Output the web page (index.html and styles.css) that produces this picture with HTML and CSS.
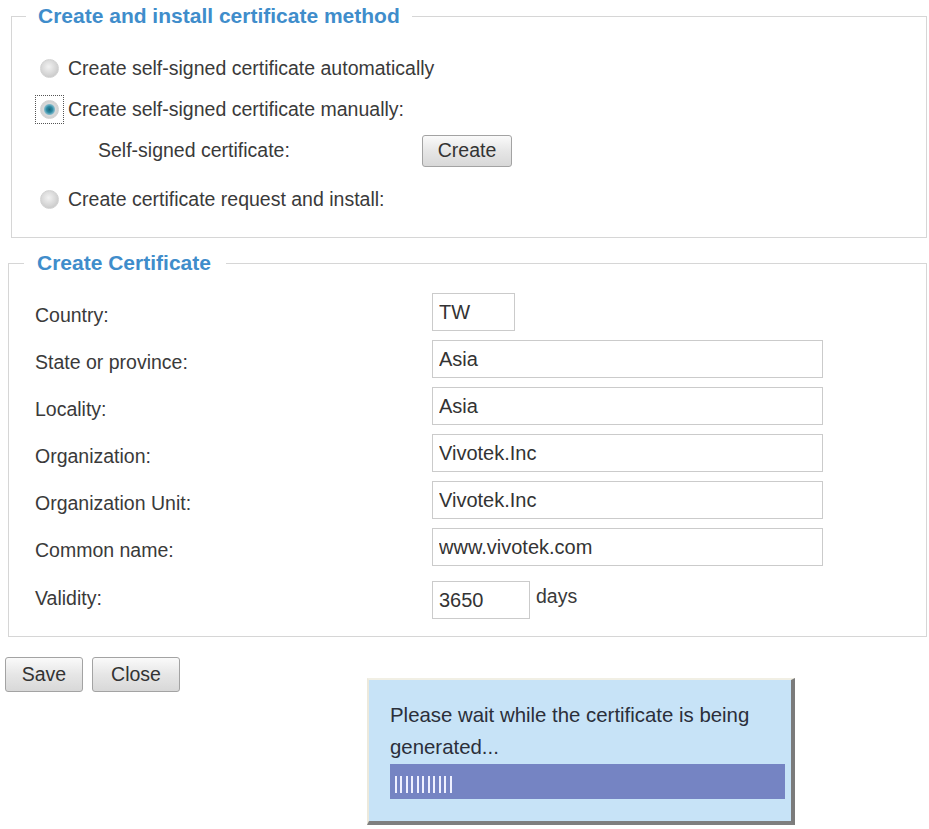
FILE: index.html
```html
<!DOCTYPE html>
<html lang="en">
<head>
    <meta charset="UTF-8">
    <meta name="viewport" content="width=device-width, initial-scale=1.0">
    <title>Certificate</title>
    <link rel="stylesheet" href="styles.css">
</head>
<body>

    <div class="page">
        <fieldset class="box method">
            <legend>Create and install certificate method</legend>
            <label class="opt">
                <span class="radio-wrap"><input type="radio" name="method"></span>
                Create self-signed certificate automatically
            </label>
            <label class="opt">
                <span class="radio-wrap focus"><input type="radio" name="method" checked></span>
                Create self-signed certificate manually:
            </label>
            <div class="sub">
                <span class="sub-label">Self-signed certificate:</span>
                <button class="btn btn-create">Create</button>
            </div>
            <label class="opt opt-last">
                <span class="radio-wrap"><input type="radio" name="method"></span>
                Create certificate request and install:
            </label>
        </fieldset>

        <fieldset class="box cert">
            <legend>Create Certificate</legend>
            <div class="form-grid">
                <span class="field-label">Country:</span>
                <div><input class="text w-short" type="text" value="TW"></div>

                <span class="field-label">State or province:</span>
                <div><input class="text w-long" type="text" value="Asia"></div>

                <span class="field-label">Locality:</span>
                <div><input class="text w-long" type="text" value="Asia"></div>

                <span class="field-label">Organization:</span>
                <div><input class="text w-long" type="text" value="Vivotek.Inc"></div>

                <span class="field-label">Organization Unit:</span>
                <div><input class="text w-long" type="text" value="Vivotek.Inc"></div>

                <span class="field-label">Common name:</span>
                <div><input class="text w-long" type="text" value="www.vivotek.com"></div>

                <span class="field-label validity-label">Validity:</span>
                <div class="days-row"><input class="text w-mid" type="text" value="3650"><span class="days">days</span></div>
            </div>
        </fieldset>

        <div class="actions">
            <button class="btn btn-save">Save</button>
            <button class="btn btn-close">Close</button>
        </div>

        <!-- progress popup over the page -->
        <div class="wait-box">
            <p class="wait-text">Please wait while the certificate is being generated...</p>
            <div class="progress"><span class="ticks"></span></div>
        </div>
    </div>

</body>
</html>
```

FILE: styles.css
```css
body {
    margin: 0;
    font-family: "Liberation Sans", Arial, sans-serif;
    font-size: 19.5px;
    color: #3a3a3a;
    background: #fff;
}

.page {
    position: relative;
    width: 929px;
    height: 829px;
    overflow: hidden;
}

.box {
    border: 1px solid #d6d6d6;
    padding: 0;
    min-width: 0;
}

.box legend {
    font-size: 21px;
    font-weight: bold;
    line-height: 28px;
    color: #3f8dcb;
}

/* method block */
.method {
    margin: 2px 2px 0 11px;
    padding: 18px 0 17px 23px;
}

.method legend {
    margin-left: -9px;
    padding: 0 12px;
}

.opt {
    display: flex;
    align-items: center;
    height: 41px;
    gap: 4px;
    cursor: pointer;
}

.opt-last {
    margin-top: 8px;
}

.radio-wrap {
    display: flex;
    align-items: center;
    justify-content: center;
    width: 29px;
    height: 29px;
    box-sizing: border-box;
    border: 1px dotted transparent;
}

.radio-wrap.focus {
    border-color: #555;
}

.radio-wrap input {
    appearance: none;
    -webkit-appearance: none;
    margin: 0;
    width: 19px;
    height: 19px;
    border-radius: 50%;
    border: 1px solid #d2d2d2;
    background: radial-gradient(circle at 45% 40%, #f2f2f2 0, #d6d6d6 55%, #bdbdbd 100%);
}

.radio-wrap input:checked {
    background: radial-gradient(circle, #1d6479 0, #2d8aa3 3px, #7bb6c8 5px, #d9d9d9 6px, #c4c4c4 100%);
}

.sub {
    display: flex;
    align-items: center;
    height: 41px;
    padding-left: 63px;
}

.sub-label {
    width: 324px;
}

/* buttons */
.btn {
    font-family: "Liberation Sans", Arial, sans-serif;
    font-size: 19.5px;
    color: #333;
    background: linear-gradient(#fafafa, #e6e6e6 50%, #d8d8d8);
    border: 1px solid #a3a3a3;
    border-radius: 3px;
    padding: 0;
    cursor: pointer;
}

.btn-create {
    width: 90px;
    height: 32px;
}

/* certificate form */
.cert {
    margin: 11px 2px 0 8px;
    padding: 16px 0 17px 26px;
}

.cert legend {
    margin-left: -11px;
    padding: 0 15px 0 13px;
}

.form-grid {
    display: grid;
    grid-template-columns: 397px 1fr;
    row-gap: 9px;
    align-items: center;
}

.field-label {
    padding-top: 7px;
}

.validity-label {
    padding-top: 0;
    margin-top: 2px;
}

.text {
    display: block;
    height: 38px;
    box-sizing: border-box;
    border: 1px solid #cbcbcb;
    padding: 0 6px;
    font-family: "Liberation Sans", Arial, sans-serif;
    font-size: 20px;
    color: #333;
    background: #fff;
}

.w-short { width: 83px; }
.w-long { width: 391px; }
.w-mid { width: 98px; }

.days-row {
    display: flex;
    align-items: center;
    gap: 6px;
    margin-top: 6px;
}

.days {
    margin-top: -8px;
}

.actions {
    display: flex;
    gap: 9px;
    margin: 20px 0 0 5px;
}

.btn-save {
    width: 78px;
    height: 35px;
}

.btn-close {
    width: 88px;
    height: 35px;
}

/* wait popup */
.wait-box {
    position: absolute;
    left: 367px;
    top: 678px;
    width: 428px;
    height: 147px;
    box-sizing: border-box;
    background: #c7e3f7;
    border-top: 2px solid #f1efe4;
    border-left: 2px solid #ece9dc;
    border-right: 4px solid #7b7b7b;
    border-bottom: 4px solid #7f7f7f;
    padding: 19px 6px 0 21px;
}

.wait-text {
    margin: 0;
    font-size: 20.4px;
    line-height: 32px;
    color: #2b2f3a;
    padding-right: 30px;
}

.progress {
    height: 35px;
    box-sizing: border-box;
    margin-top: 1px;
    padding: 12px 0 0 5px;
    background: #7584c3;
}

.ticks {
    display: block;
    width: 60px;
    height: 17px;
    background: repeating-linear-gradient(90deg, #eef0ff 0 2px, transparent 2px 5.5px);
}
```
